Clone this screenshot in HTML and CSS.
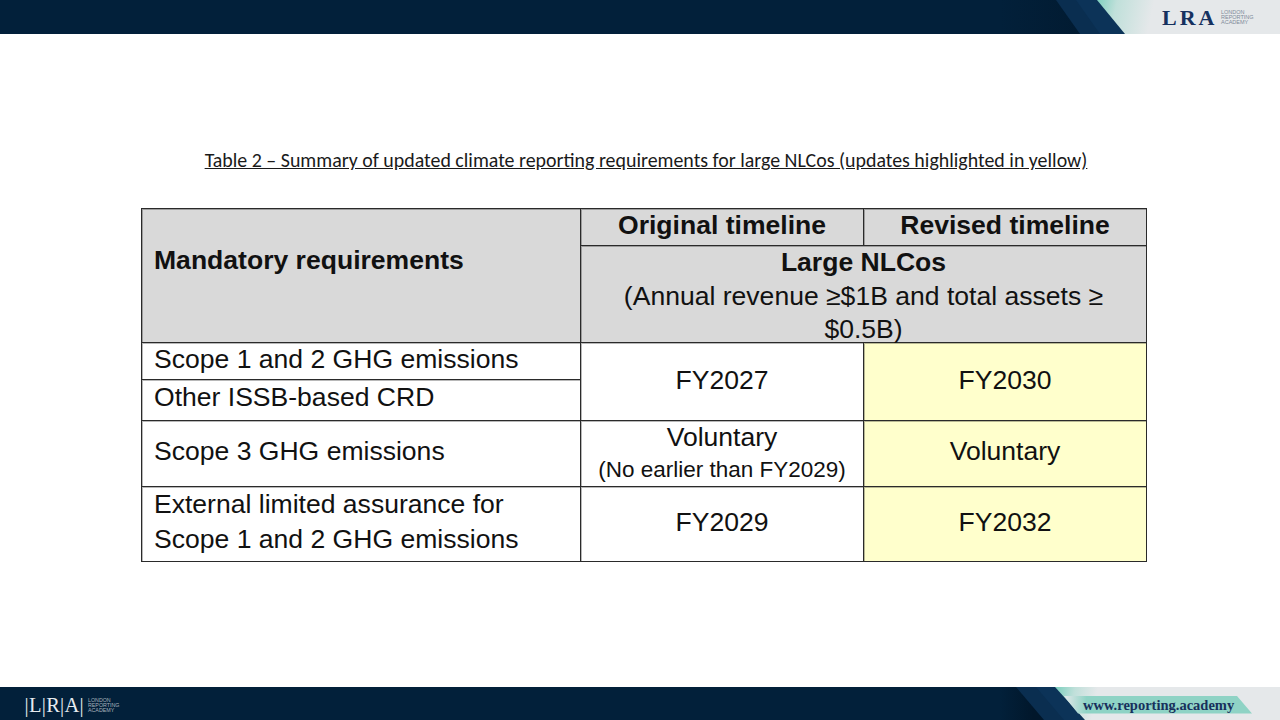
FILE: index.html
```html
<!DOCTYPE html>
<html lang="en">
<head>
<meta charset="utf-8">
<title>Table 2</title>
<link rel="stylesheet" href="styles.css">
</head>
<body>
<div class="slide">
  <header class="topbar">
    <svg class="cap" width="280" height="34" viewBox="0 0 280 34">
      <defs>
        <linearGradient id="tfade" x1="0" x2="1" y1="0" y2="0"><stop offset="0" stop-color="#02203a"/><stop offset=".5" stop-color="#01172b"/><stop offset="1" stop-color="#01172b"/></linearGradient>
        <linearGradient id="tteal" gradientUnits="userSpaceOnUse" x1="95" x2="150" y1="10" y2="22"><stop offset="0" stop-color="#7fd0bf"/><stop offset=".35" stop-color="#c0e0da"/><stop offset="1" stop-color="#e5e8ea"/></linearGradient>
      </defs>
      <rect width="280" height="34" fill="url(#tfade)"/>
      <polygon points="56,0 280,0 280,34 80,34" fill="#0a2e50"/>
      <polygon points="76,0 280,0 280,34 100,34" fill="#0c3358"/>
      <polygon points="97,0 280,0 280,34 125,34" fill="url(#tteal)"/>
      <text class="lra-top" x="162" y="25">LRA</text>
      <text class="tiny-top" x="221" y="13.500">LONDON</text>
      <text class="tiny-top" x="221" y="18.500">REPORTING</text>
      <text class="tiny-top" x="221" y="23.500">ACADEMY</text>
    </svg>
  </header>
  <main class="content">
    <p class="caption">Table 2 – Summary of updated climate reporting requirements for large NLCos (updates highlighted in yellow)</p>
    <table class="req">
      <colgroup><col class="c1"><col class="c2"><col class="c3"></colgroup>
      <tr class="r1">
        <th class="first head-main" rowspan="2">Mandatory requirements</th>
        <th>Original timeline</th>
        <th>Revised timeline</th>
      </tr>
      <tr class="r2">
        <th colspan="2" class="scope"><div class="scope-inner"><strong>Large NLCos</strong><br><span class="light">(Annual revenue ≥$1B and total assets ≥ $0.5B)</span></div></th>
      </tr>
      <tr class="r3">
        <td class="first s1">Scope 1 and 2 GHG emissions</td>
        <td rowspan="2">FY2027</td>
        <td rowspan="2" class="hl">FY2030</td>
      </tr>
      <tr class="r4"><td class="first s2">Other ISSB-based CRD</td></tr>
      <tr class="r5">
        <td class="first">Scope 3 GHG emissions</td>
        <td class="stack">Voluntary<small>(No earlier than FY2029)</small></td>
        <td class="hl">Voluntary</td>
      </tr>
      <tr class="r6">
        <td class="first ext">External limited assurance for<br>Scope 1 and 2 GHG emissions</td>
        <td>FY2029</td>
        <td class="hl">FY2032</td>
      </tr>
    </table>
  </main>
  <footer class="botbar">
    <svg class="logo" width="130" height="33" viewBox="0 0 130 33">
      <text class="lra-bot" x="24.500" y="25">|L|R|A|</text>
      <text class="tiny-bot" x="88" y="14.500">LONDON</text>
      <text class="tiny-bot" x="88" y="19.500">REPORTING</text>
      <text class="tiny-bot" x="88" y="24.500">ACADEMY</text>
    </svg>
    <svg class="cap" width="280" height="33" viewBox="0 0 280 33">
      <defs>
        <linearGradient id="bfade" x1="0" x2="1" y1="0" y2="0"><stop offset="0" stop-color="#02203a"/><stop offset=".12" stop-color="#01172b"/><stop offset="1" stop-color="#01172b"/></linearGradient>
        <linearGradient id="bteal" gradientUnits="userSpaceOnUse" x1="55" x2="95" y1="8" y2="16"><stop offset="0" stop-color="#7fd0bf"/><stop offset=".45" stop-color="#c0e0da"/><stop offset="1" stop-color="#e5e8ea"/></linearGradient>
        <linearGradient id="rib" x1="0" x2="1" y1="0" y2="0"><stop offset="0" stop-color="#e5e8ea"/><stop offset=".12" stop-color="#8fd3c5"/><stop offset="1" stop-color="#8fd3c5"/></linearGradient>
      </defs>
      <rect width="280" height="33" fill="url(#bfade)"/>
      <polygon points="16,0 280,0 280,33 44,33" fill="#0a2e50"/>
      <polygon points="36,0 280,0 280,33 64,33" fill="#0c3358"/>
      <polygon points="55,0 280,0 280,33 85,33" fill="url(#bteal)"/>
      <polygon points="64,9 237,9 252,26.500 78,26.500" fill="url(#rib)"/>
      <text class="url" x="83" y="23">www.reporting.academy</text>
    </svg>
  </footer>
</div>
</body>
</html>
```

FILE: styles.css
```css
* { box-sizing: border-box; }
html, body { margin: 0; padding: 0; }
body { background: #fff; font-family: "Liberation Sans", Arial, sans-serif; }
.slide { width: 1280px; height: 720px; display: flex; flex-direction: column; overflow: hidden; background: #fff; }

.topbar { height: 34px; flex: none; background: #02203a; display: flex; justify-content: flex-end; }
.botbar { height: 33px; flex: none; background: #02203a; display: flex; justify-content: space-between; }
.cap, .logo { display: block; flex: none; }

.lra-top { font: 700 22px "Liberation Serif", serif; fill: #15315f; letter-spacing: 3px; }
.tiny-top { font: 400 5.500px "Liberation Sans", sans-serif; fill: #808a99; }
.lra-bot { font: 400 20.500px "Liberation Serif", serif; fill: #e6ebef; letter-spacing: .3px; }
.tiny-bot { font: 400 5.300px "Liberation Sans", sans-serif; fill: #aab4be; }
.url { font: 700 14.500px "Liberation Serif", serif; fill: #17305c; }

.content { flex: 1; display: flex; flex-direction: column; align-items: center; padding-top: 115px; }
.caption { margin: 0 0 36px 12px; font: 400 19.920px/23px Carlito, Lato, "Liberation Sans", sans-serif; color: #1a1a1a; text-decoration: underline; white-space: nowrap; }

.req { border-collapse: collapse; table-layout: fixed; width: 1006px; font-size: 26.550px; color: #111; align-self: flex-start; margin-left: 141px; }
.c1 { width: 439px; }
.c2, .c3 { width: 283px; }
.req th, .req td { border: 1px solid #2a2a2a; padding: 0 0 2px; text-align: center; vertical-align: middle; font-weight: 400; line-height: 33px; box-shadow: inset 1px 1px 0 rgba(0, 0, 0, .28); }
.req th { background: #d9d9d9; font-weight: 700; padding-bottom: 3px; }
.req .first { text-align: left; padding-left: 12px; }
.req .head-main { vertical-align: top; padding-top: 35px; }
.req strong { font-weight: 700; }
.req .light { font-weight: 400; }
.req .scope { padding: 0 30px; vertical-align: top; }
.scope-inner { height: 95px; line-height: 33.500px; }
.req .s1 { padding-bottom: 3px; }
.req .s2 { padding-bottom: 5px; }
.req .ext { line-height: 35px; padding-bottom: 3px; }
.hl { background: #ffffcc; }
.req small { display: block; font-size: 22.500px; line-height: 31px; }
.req .r5 td { padding-bottom: 4px; }
.req .r5 .stack { padding-bottom: 0; vertical-align: top; }
.req .r6 td { padding-bottom: 4px; }
.r1 { height: 36px; }
.r2 { height: 97px; }
.r3 { height: 37px; }
.r4 { height: 41px; }
.r5 { height: 66px; }
.r6 { height: 75px; }
```
